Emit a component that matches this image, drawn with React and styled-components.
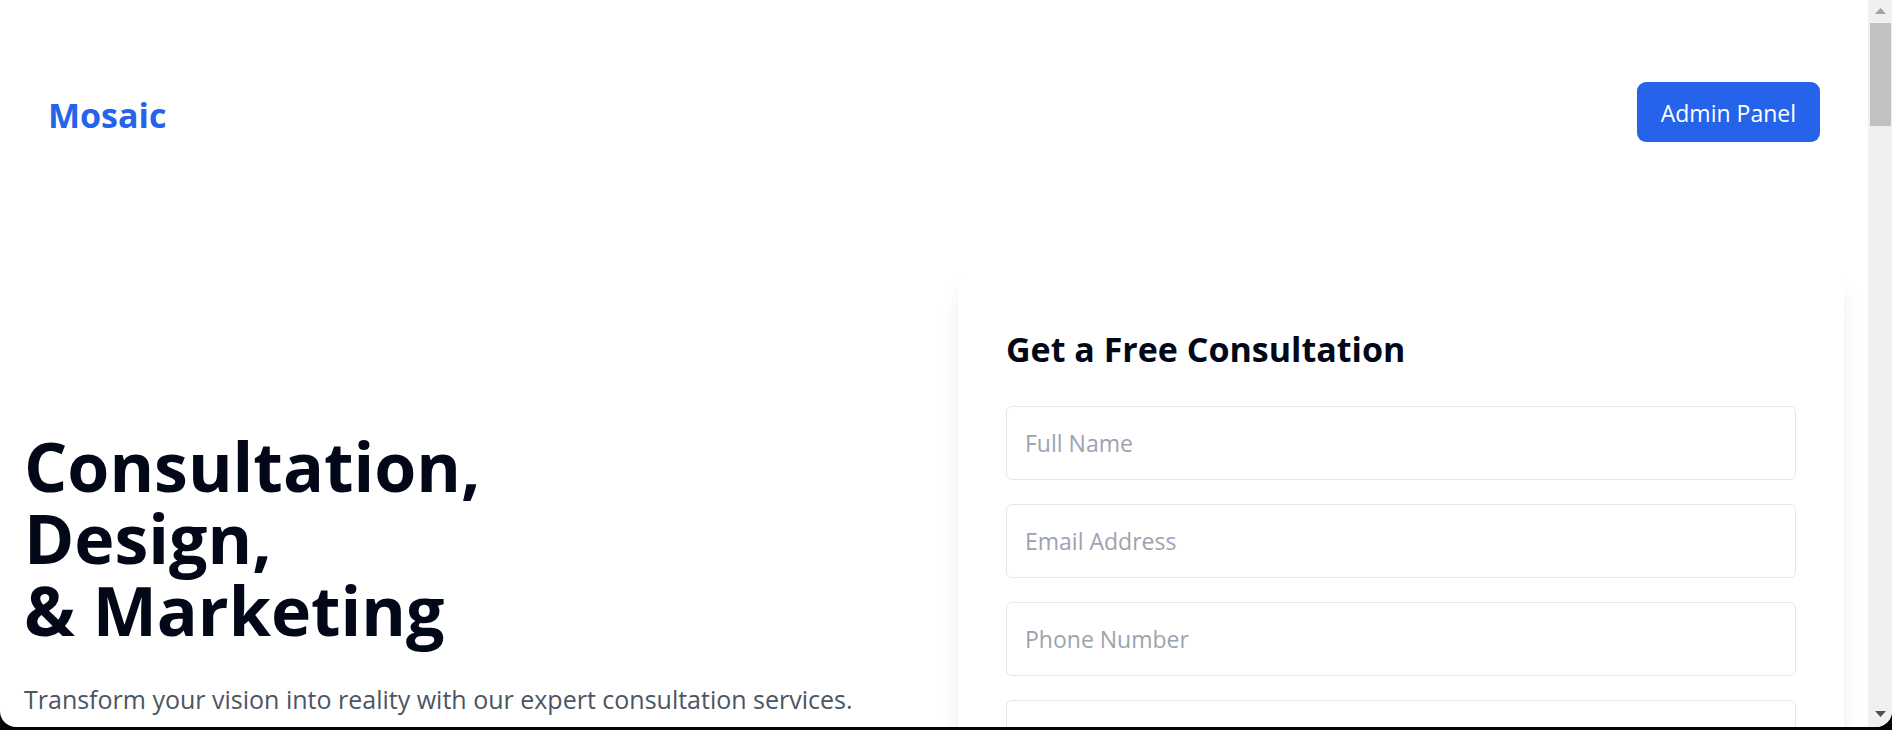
import React from "react";
import styled, { createGlobalStyle } from "styled-components";

const GlobalStyle = createGlobalStyle`
  *, *::before, *::after { box-sizing: border-box; }
  body {
    margin: 0;
    background: #060606;
    color: #020817;
    font-family: "Segoe UI", "Open Sans", "Noto Sans", sans-serif;
    font-size: 23px;
    line-height: 36px;
  }
  h1, h2, p { margin: 0; }
`;

const Screen = styled.div`
  display: flex;
  flex-direction: column;
  height: 100vh;
  padding-bottom: 3px;
`;

const Frame = styled.div`
  display: flex;
  flex: 1;
  min-height: 0;
  overflow: hidden;
  background: #fff;
  border-radius: 0 0 16px 16px;
`;

const Page = styled.div`
  flex: 1;
  min-width: 0;
  overflow: hidden;
`;

const Header = styled.header`
  display: flex;
  align-items: flex-end;
  justify-content: space-between;
  padding: 82px 48px;
`;

const Brand = styled.a`
  color: #2563eb;
  font-size: 34px;
  font-weight: 700;
  line-height: 54px;
  text-decoration: none;
`;

const AdminButton = styled.button`
  padding: 13px 24px 11px;
  border: 0;
  border-radius: 9px;
  background: #2563eb;
  color: #fff;
  font: inherit;
  cursor: pointer;
`;

const Hero = styled.main`
  display: grid;
  grid-template-columns: repeat(2, minmax(0, 1fr));
  gap: 48px;
  padding: 48px 24px;
`;

const Intro = styled.section`
  display: flex;
  flex-direction: column;
  gap: 32px;
  padding-top: 158px;
`;

const Title = styled.h1`
  font-size: 68px;
  font-weight: 700;
  line-height: 72px;
`;

const TitleLine = styled.span`
  display: block;
`;

const Lead = styled.p`
  color: #4b5563;
  font-size: 25px;
  line-height: 42px;
`;

const Card = styled.section`
  padding: 48px;
  border-radius: 12px;
  background: #fff;
  box-shadow: 0 15px 22px -4px rgba(0, 0, 0, 0.1), 0 6px 9px -6px rgba(0, 0, 0, 0.1);
`;

const CardTitle = styled.h2`
  margin-bottom: 28px;
  font-size: 34px;
  font-weight: 700;
  line-height: 58px;
`;

const Form = styled.form`
  display: flex;
  flex-direction: column;
  gap: 24px;
`;

const Field = styled.input`
  width: 100%;
  height: ${(p) => p.$height || "74px"};
  padding: 18px;
  border: 1px solid #e2e8f0;
  border-radius: 6px;
  background: #fff;
  color: inherit;
  font: inherit;
  resize: none;
  &::placeholder { color: #9ca3af; opacity: 1; }
`;

const ScrollTrack = styled.div`
  display: flex;
  flex-direction: column;
  align-items: center;
  width: 24px;
  background: #f0f0f0;
`;

const ScrollArrow = styled.svg`
  display: block;
  width: 24px;
  height: 23px;
  fill: ${(p) => p.$color};
`;

const ScrollThumb = styled.div`
  width: 21px;
  height: 103px;
  margin-bottom: auto;
  background: #c1c1c1;
`;

export default function App() {
  return (
    <>
      <GlobalStyle />
      <Screen>
        <Frame>
          <Page>
            <Header>
              <Brand href="#">Mosaic</Brand>
              <AdminButton type="button">Admin Panel</AdminButton>
            </Header>
            <Hero>
              <Intro>
                <Title>
                  <TitleLine>Consultation,</TitleLine>
                  <TitleLine>Design,</TitleLine>
                  <TitleLine>&amp; Marketing</TitleLine>
                </Title>
                <Lead>Transform your vision into reality with our expert consultation services.</Lead>
              </Intro>
              <Card>
                <CardTitle>Get a Free Consultation</CardTitle>
                <Form>
                  <Field type="text" placeholder="Full Name" aria-label="Full Name" />
                  <Field type="email" placeholder="Email Address" aria-label="Email Address" />
                  <Field type="tel" placeholder="Phone Number" aria-label="Phone Number" />
                  <Field as="textarea" $height="180px" aria-label="Message" />
                </Form>
              </Card>
            </Hero>
          </Page>
          <ScrollTrack aria-hidden="true">
            <ScrollArrow $color="#a3a3a3" viewBox="0 0 24 23">
              <path d="M7 14 12.500 8 18 14Z" />
            </ScrollArrow>
            <ScrollThumb />
            <ScrollArrow $color="#505050" viewBox="0 0 24 23">
              <path d="M7 7H18L12.500 13Z" />
            </ScrollArrow>
          </ScrollTrack>
        </Frame>
      </Screen>
    </>
  );
}
